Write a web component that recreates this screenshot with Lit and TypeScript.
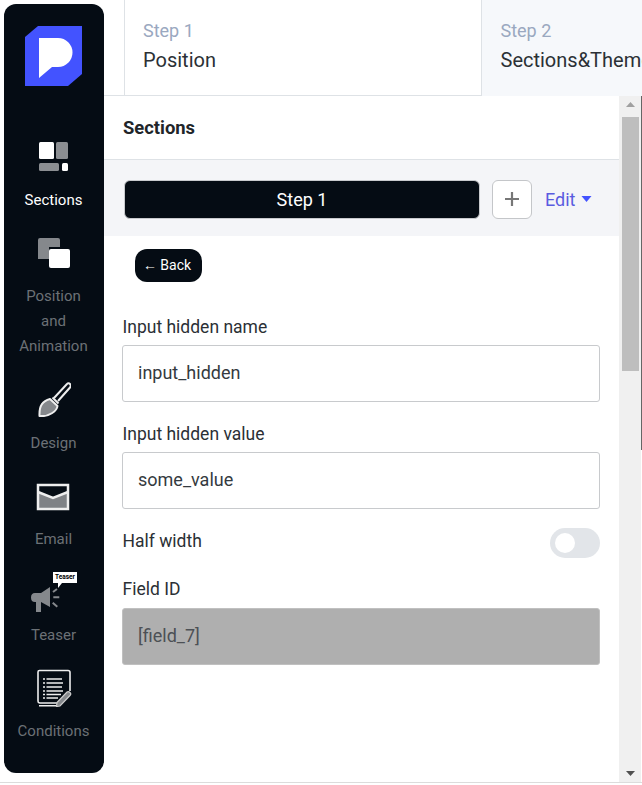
import { LitElement, html, css } from "lit";
import { customElement } from "lit/decorators.js";

const logo = html`<svg width="57" height="60" viewBox="0 0 57 60"><path fill="#4353ff" d="M13 0H57V48L43 60H0V11Z"/><path fill="#fff" d="M14 12H33A14.500 14.500 0 0 1 33 41H27L14 52Z"/></svg>`;
const sections = html`<svg width="30" height="30" viewBox="0 0 30 30"><rect x="0" y="0" width="15" height="17" rx="1.500" fill="#fff"/><rect x="17" y="0" width="12" height="17" rx="1.500" fill="#8b8e92"/><rect x="0" y="21" width="20" height="8" rx="1.500" fill="#8b8e92"/><rect x="23" y="21" width="6" height="8" rx="1.500" fill="#fff"/></svg>`;
const position = html`<svg width="33" height="31" viewBox="0 0 33 31"><path fill="#85888c" d="M2 0H20Q22 0 22 2V9H11V21H0V2Q0 0 2 0Z"/><rect x="11" y="11" width="21" height="19" rx="2" fill="#fff"/></svg>`;
const brush = html`<svg width="34" height="36" viewBox="0 0 34 36"><path d="M17 17L29.500 3.500Q31.500 1.500 33 3Q34.500 4.500 33 6.500L21 20" fill="none" stroke="#eee" stroke-width="2"/><path d="M15.500 16.500L21.500 22.500" stroke="#eee" stroke-width="2"/><path d="M13 18C6 20 2 24 2.500 35C12 36 20 30 20.500 25Z" fill="#85888c" stroke="#eee" stroke-width="2" stroke-linejoin="round"/></svg>`;
const mail = html`<svg width="34" height="28" viewBox="0 0 34 28"><rect x="2" y="2" width="30" height="24" fill="#7f8286"/><path d="M2 2H32V9L17 15L2 9Z" fill="#050c14"/><path d="M2 9L17 15L32 9" fill="none" stroke="#eee" stroke-width="2.500"/><rect x="2" y="2" width="30" height="24" fill="none" stroke="#eee" stroke-width="2.500"/></svg>`;
const teaser = html`<svg width="50" height="44" viewBox="0 0 50 44"><path d="M24 2H48V13H33L29 18V13H24Z" fill="#fff"/><path fill="#85888c" d="M6 23H12L21 17V37L12 32V42H7V32H6Q2 32 2 27.500Q2 23 6 23Z"/><path d="M24 22L28 19M24.300 27.300H30.300M23.700 32.700L28.300 36.700" stroke="#85888c" stroke-width="2"/></svg>`;
const cond = html`<svg width="36" height="38" viewBox="0 0 36 38"><path d="M2 32V3Q2 1.500 3.500 1.500H32Q34 1.500 34 3.500V22" fill="none" stroke="#eee" stroke-width="1.600"/><path d="M2 32Q2 34 4 34H21M3 36.800H21" fill="none" stroke="#eee" stroke-width="1.500"/><path d="M10.500 10H26M10.500 14H27M10.500 18H26M10.500 22H27M10.500 25.500H25M10.500 29H22" stroke="#eee" stroke-width="1.400"/><path d="M7 10H9M7 14H9M7 18H9M7 22H9M7 25.500H9M7 29H9" stroke="#eee" stroke-width="1.400"/><path d="M21 33.500L31 23Q32.500 22 34 23.500Q35.500 25 34 26.500L24 37L20.500 37.500Z" fill="#85888c" stroke="#ccc" stroke-width="1.200"/></svg>`;

@customElement("app-root")
export class AppRoot extends LitElement {
  static styles = css`
    :host { display: block; width: 642px; height: 785px; overflow: hidden; background: #fff; font-family: Roboto, sans-serif; color: #212529; }
    * { box-sizing: border-box; }
    .page { display: flex; height: 783px; border-bottom: 1px solid #dcdcdc; }
    .side { flex: none; width: 100px; height: 769px; margin: 4px 0 0 4px; background: #050c14; border-radius: 12px; display: flex; flex-direction: column; align-items: center; padding: 22px 1px 0 0; color: #6c7176; font-size: 15px; line-height: 25px; text-align: center; }
    .logo { height: 60px; margin-bottom: 56px; display: flex; }
    .nav { display: flex; flex-direction: column; align-items: center; }
    .nav.on { color: #fff; }
    .ic { display: flex; align-items: center; justify-content: center; }
    .nudge { margin-left: 2px; }
    .l1 { margin-top: 16px; }
    .n2 { margin-top: 25px; }
    .l2 { margin-top: 15px; }
    .n3 { margin-top: 22px; }
    .l3 { margin-top: 14px; }
    .n4 { margin-top: 27px; }
    .l4 { margin-top: 16px; }
    .n5 { margin-top: 18px; }
    .l5 { margin-top: 9px; }
    .n6 { margin-top: 21px; }
    .l6 { margin-top: 12px; }
    .tip { position: relative; margin-left: 1px; }
    .tip b { position: absolute; left: 24px; top: 2px; width: 24px; height: 11px; font: 700 6.500px/11px Roboto, sans-serif; color: #000; text-align: center; }
    .main { flex: 1; min-width: 0; display: flex; flex-direction: column; }
    .tabs { height: 96px; flex: none; display: flex; padding-left: 20px; border-bottom: 1px solid #dee2e6; }
    .tab { padding: 18px 0 0 18px; height: 95px; }
    .tab.a { width: 358px; background: #fff; border: 1px solid #dee2e6; border-width: 0 1px 0 1px; }
    .tab.b { flex: 1; height: 96px; margin-bottom: -1px; background: #f6f8fb; white-space: nowrap; overflow: hidden; padding-left: 18.500px; }
    .tab small { display: block; font-size: 18px; line-height: 26px; color: #9aa8c0; }
    .tab span { display: block; font-size: 20px; line-height: 32px; color: #2b3035; }
    .body { flex: 1; min-height: 0; display: flex; }
    .panel { flex: 1; min-width: 0; }
    .h { height: 64px; border-bottom: 1px solid #dee2e6; padding-left: 19px; font-size: 18.400px; font-weight: 700; line-height: 63px; color: #212529; }
    .bar { height: 76px; background: #f4f5f8; display: flex; align-items: center; padding: 2px 0 0 20px; }
    .step { width: 356px; height: 39px; background: #050c14; border: 1px solid #c8cacd; border-radius: 6px; color: #fff; font-size: 18px; line-height: 37px; text-align: center; }
    .plus { width: 40px; height: 39px; margin-left: 12px; background: #fff; border: 1px solid #c4c6c9; border-radius: 6px; display: flex; align-items: center; justify-content: center; }
    .edit { margin-left: 13px; color: #5a5ce0; font-size: 18px; display: flex; align-items: center; gap: 6px; }
    .back { display: inline-block; margin: 13px 0 0 31px; height: 33px; width: 67px; padding-right: 3px; background: #050c14; color: #fff; border-radius: 12px; font-size: 14px; line-height: 33px; text-align: center; }
    .form { padding: 0 19px 0 18px; }
    .lab { font-size: 17.500px; line-height: 26px; margin: 32px 0 0 .5px; color: #2b3035; }
    .inp { height: 57px; margin-top: 5px; border: 1px solid #c8cacd; border-radius: 3px; padding-left: 15px; font-size: 18px; line-height: 54px; color: #343a40; }
    .lab.second { margin-top: 19px; }
    .row { display: flex; justify-content: space-between; align-items: flex-start; margin-top: 19px; height: 30px; }
    .row .lab { margin: 0 0 0 .5px; }
    .tog { width: 50px; height: 30px; border-radius: 15px; background: #e2e5e9; padding: 5px; }
    .tog i { display: block; width: 20px; height: 20px; border-radius: 50%; background: #fff; }
    .inp.dis { background: #afafaf; border-color: #c0c0c0; color: #4c5055; margin-top: 6px; }
    .lab.third { margin-top: 18px; }
    .sb { flex: none; width: 22px; background: #f0f0f0; display: flex; flex-direction: column; align-items: center; }
    .edge { flex: none; width: 1px; height: 354px; background: #666; }
    .arr { height: 17px; display: flex; align-items: center; justify-content: center; flex: none; }
    .th { width: 17px; height: 254px; background: #bebebe; flex: none; margin-top: 4px; }
    .sp { flex: 1; }
  `;
  render() {
    return html`<div class="page">
      <aside class="side">
        <div class="logo">${logo}</div>
        <div class="nav on"><div class="ic nudge">${sections}</div><div class="l1">Sections</div></div>
        <div class="nav n2"><div class="ic nudge">${position}</div><div class="l2">Position<br />and<br />Animation</div></div>
        <div class="nav n3"><div class="ic">${brush}</div><div class="l3">Design</div></div>
        <div class="nav n4"><div class="ic">${mail}</div><div class="l4">Email</div></div>
        <div class="nav n5"><div class="ic tip">${teaser}<b>Teaser</b></div><div class="l5">Teaser</div></div>
        <div class="nav n6"><div class="ic">${cond}</div><div class="l6">Conditions</div></div>
      </aside>
      <div class="main">
        <div class="tabs">
          <div class="tab a"><small>Step 1</small><span>Position</span></div>
          <div class="tab b"><small>Step 2</small><span>Sections&amp;Theme</span></div>
        </div>
        <div class="body">
          <div class="panel">
            <div class="h">Sections</div>
            <div class="bar">
              <div class="step">Step 1</div>
              <div class="plus"><svg width="14" height="14" viewBox="0 0 14 14"><path d="M7 0V14M0 7H14" stroke="#777" stroke-width="2.200"/></svg></div>
              <div class="edit">Edit <svg width="11" height="6" viewBox="0 0 11 6"><path d="M0.500 0H10.500L5.500 6Z" fill="#4353ff"/></svg></div>
            </div>
            <div class="back">← Back</div>
            <div class="form">
              <div class="lab">Input hidden name</div>
              <div class="inp">input_hidden</div>
              <div class="lab second">Input hidden value</div>
              <div class="inp">some_value</div>
              <div class="row"><div class="lab">Half width</div><div class="tog"><i></i></div></div>
              <div class="lab third">Field ID</div>
              <div class="inp dis">[field_7]</div>
            </div>
          </div>
          <div class="sb">
            <div class="arr"><svg width="9" height="5" viewBox="0 0 9 5"><path d="M4.500 0L9 5H0Z" fill="#a0a0a0"/></svg></div>
            <div class="th"></div>
            <div class="sp"></div>
            <div class="arr"><svg width="9" height="5" viewBox="0 0 9 5"><path d="M0 0H9L4.500 5Z" fill="#505050"/></svg></div>
          </div>
          <div class="edge"></div>
        </div>
      </div>
    </div>`;
  }
}
